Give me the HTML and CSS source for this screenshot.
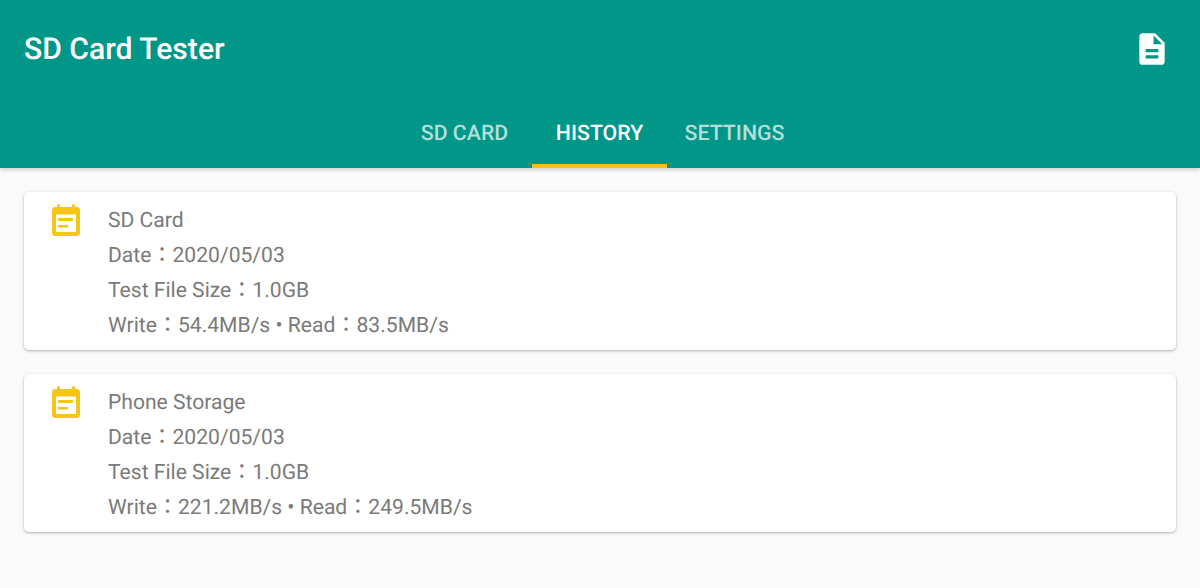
FILE: index.html
```html
<!DOCTYPE html>
<html lang="en">
<head>
<meta charset="utf-8">
<title>SD Card Tester</title>
<link rel="stylesheet" href="styles.css">
</head>
<body>
<header class="appbar">
  <div class="toolbar">
    <h1 class="title">SD Card Tester</h1>
    <svg class="doc-icon" viewBox="0 0 24 24" aria-hidden="true"><path d="M14 2H6c-1.1 0-2 .9-2 2v16c0 1.1.9 2 2 2h12c1.1 0 2-.9 2-2V8l-6-6zm2 16H8v-2h8v2zm0-4H8v-2h8v2zm-3-5V3.5L18.5 9H13z"/></svg>
  </div>
  <nav class="tabs">
    <div class="tab">SD CARD</div>
    <div class="tab active">HISTORY</div>
    <div class="tab">SETTINGS</div>
  </nav>
</header>
<main class="list">
  <article class="card">
    <svg class="cal-icon" viewBox="0 0 28 32" aria-hidden="true"><path fill-rule="evenodd" d="M5 3V1.500a1.500 1.500 0 0 1 3 0V3h12V1.500a1.500 1.500 0 0 1 3 0V3h1.500A3.500 3.500 0 0 1 28 6.500v22a3.500 3.500 0 0 1-3.500 3.500h-21A3.500 3.500 0 0 1 0 28.500v-22A3.500 3.500 0 0 1 3.500 3zM4 10.500V27a1 1 0 0 0 1 1h18a1 1 0 0 0 1-1V10.500z"/><path d="M6 14h15v3H6zM6 21h10v2.500H6z"/></svg>
    <div class="info">
      <div class="line">SD Card</div>
      <div class="line">Date<span class="colon">：</span>2020/05/03</div>
      <div class="line">Test File Size<span class="colon">：</span>1.0GB</div>
      <div class="line">Write<span class="colon">：</span>54.4MB/s • Read<span class="colon">：</span>83.5MB/s</div>
    </div>
  </article>
  <article class="card">
    <svg class="cal-icon" viewBox="0 0 28 32" aria-hidden="true"><path fill-rule="evenodd" d="M5 3V1.500a1.500 1.500 0 0 1 3 0V3h12V1.500a1.500 1.500 0 0 1 3 0V3h1.500A3.500 3.500 0 0 1 28 6.500v22a3.500 3.500 0 0 1-3.500 3.500h-21A3.500 3.500 0 0 1 0 28.500v-22A3.500 3.500 0 0 1 3.500 3zM4 10.500V27a1 1 0 0 0 1 1h18a1 1 0 0 0 1-1V10.500z"/><path d="M6 14h15v3H6zM6 21h10v2.500H6z"/></svg>
    <div class="info">
      <div class="line">Phone Storage</div>
      <div class="line">Date<span class="colon">：</span>2020/05/03</div>
      <div class="line">Test File Size<span class="colon">：</span>1.0GB</div>
      <div class="line">Write<span class="colon">：</span>221.2MB/s • Read<span class="colon">：</span>249.5MB/s</div>
    </div>
  </article>
</main>
</body>
</html>
```
FILE: styles.css
```css
* { box-sizing: border-box; }
html, body { margin: 0; height: 100%; overflow: hidden; }
body {
  background: #fafafa;
  font-family: Roboto, "Noto Sans CJK TC", sans-serif;
  text-rendering: geometricPrecision;
}
.appbar {
  height: 168px;
  background: #009688;
  box-shadow: 0 2px 4px rgba(0,0,0,.16);
  display: flex;
  flex-direction: column;
}
.toolbar {
  height: 97px;
  padding: 0 29px 0 24px;
  display: flex;
  align-items: center;
  justify-content: space-between;
}
.title {
  margin: 2px 0 0;
  font-size: 30.100px;
  font-weight: 500;
  color: #fff;
}
.doc-icon { width: 38px; height: 38px; fill: #fff; }
.tabs {
  flex: 1;
  display: flex;
  justify-content: center;
  padding-right: 1px;
}
.tab {
  width: 135px;
  display: flex;
  align-items: center;
  justify-content: center;
  font-size: 21.300px;
  font-weight: 500;
  color: #b2dfdb;
  padding-top: 6px;
  border-bottom: 4px solid transparent;
}
.tab.active { color: #fff; border-bottom-color: #f3c01c; }
.list {
  padding: 24px;
  display: flex;
  flex-direction: column;
  gap: 24px;
}
.card {
  height: 158px;
  background: #fff;
  border-radius: 5px;
  box-shadow: 0 1px 3px rgba(0,0,0,.3);
  display: flex;
  padding: 11px 0 0 28px;
}
.cal-icon { width: 28px; height: 32px; margin-top: 1px; fill: #f5c518; flex: none; }
.info {
  margin-left: 28px;
  color: #7a7a7a;
  font-size: 21.100px;
}
.line { height: 35px; line-height: 35px; white-space: nowrap; }
.colon { font-family: "Noto Sans CJK TC", sans-serif; line-height: 0; }
```
